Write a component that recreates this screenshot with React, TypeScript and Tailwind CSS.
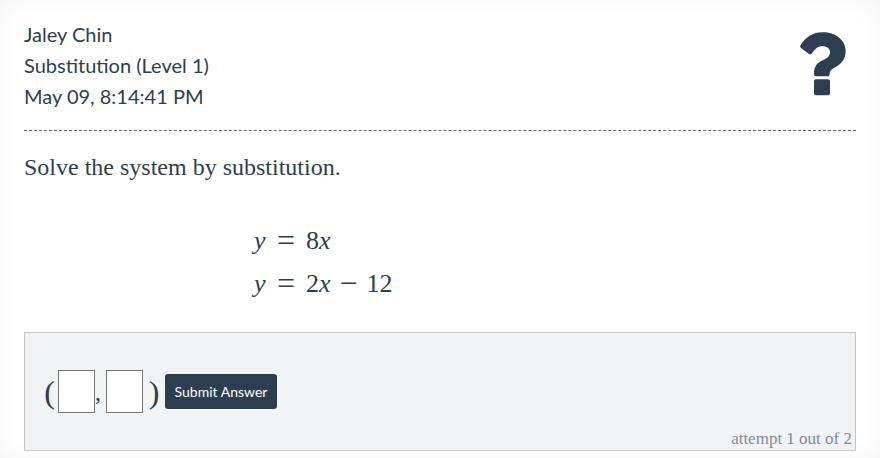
import { useState, type FormEvent } from 'react';

type Equation = { coefficient: string; rest: string };

const equations: Equation[] = [
  { coefficient: '8', rest: '' },
  { coefficient: '2', rest: '12' },
];

function QuestionIcon() {
  return (
    <svg viewBox="0 0 138 192" className="h-16 w-[46px]" fill="currentColor" aria-hidden="true">
      <path d="M2 39C18 15 38 1 68 1c38 0 69 23 69 56 0 25-13 39-34 50-10 5-14 10-14 18 0 5-2 8-7 8H48c-4 0-6-2-6-6v-5c0-17 9-29 26-37 15-7 22-13 22-24 0-11-9-18-22-18-13 0-21 5-32 21-3 4-6 4-9 2L3 48c-3-2-3-6-1-9Z" />
      <rect x="42" y="142" width="48" height="48" rx="6" />
    </svg>
  );
}

function EquationRow({ coefficient, rest }: Equation) {
  return (
    <div className="flex items-center gap-2">
      <i className="w-3">y</i>
      <span className="w-6 text-center text-[32px]">=</span>
      <span>
        {coefficient}
        <i>x</i>
      </span>
      {rest && (
        <>
          <span className="w-5 text-center text-[32px]">−</span>
          <span>{rest}</span>
        </>
      )}
    </div>
  );
}

export default function App() {
  const [x, setX] = useState('');
  const [y, setY] = useState('');

  const handleSubmit = (e: FormEvent) => {
    e.preventDefault();
  };

  return (
    <main className="min-h-screen bg-white px-6 pt-[19px] pb-2 font-['Liberation_Serif',serif] text-[#2c3e50] shadow-[inset_0_0_24px_#f5f5f5]">
      <header className="flex items-start justify-between border-b border-dashed border-[#666] pb-[18px]">
        <div className="font-['Lato',sans-serif] text-xl leading-[31px]">
          <p>Jaley Chin</p>
          <p>Substitution (Level 1)</p>
          <p>May 09, 8:14:41 PM</p>
        </div>
        <button type="button" aria-label="Help" className="mt-[13px] mr-[10px]">
          <QuestionIcon />
        </button>
      </header>

      <h1 className="mt-5 text-2xl leading-8">Solve the system by substitution.</h1>

      <div className="mt-9 ml-[230px] flex flex-col text-[26px] leading-[43px]">
        {equations.map((eq) => (
          <EquationRow key={eq.coefficient} {...eq} />
        ))}
      </div>

      <form onSubmit={handleSubmit} className="mt-[27px] border border-[#c4c6c8] bg-[#f2f3f5] px-4 pt-[37px]">
        <div className="flex items-center">
          <span className="w-[17px] text-center text-[32px] leading-8">(</span>
          <input
            aria-label="x value"
            value={x}
            onChange={(e) => setX(e.target.value)}
            className="h-[43px] w-[37px] border border-[#777] bg-white text-center text-xl"
          />
          <span className="w-[11px] text-2xl leading-8">,</span>
          <input
            aria-label="y value"
            value={y}
            onChange={(e) => setY(e.target.value)}
            className="h-[43px] w-[37px] border border-[#777] bg-white text-center text-xl"
          />
          <span className="w-[22px] text-center text-[32px] leading-8">)</span>
          <button
            type="submit"
            className="h-[35px] w-28 rounded-[3px] bg-[#2c3e50] font-['Lato',sans-serif] text-sm text-white"
          >
            Submit Answer
          </button>
        </div>
        <p className="-mr-[13px] mt-[15px] text-right text-[17px] leading-[22px] text-[#7f8c99]">attempt 1 out of 2</p>
      </form>
    </main>
  );
}
